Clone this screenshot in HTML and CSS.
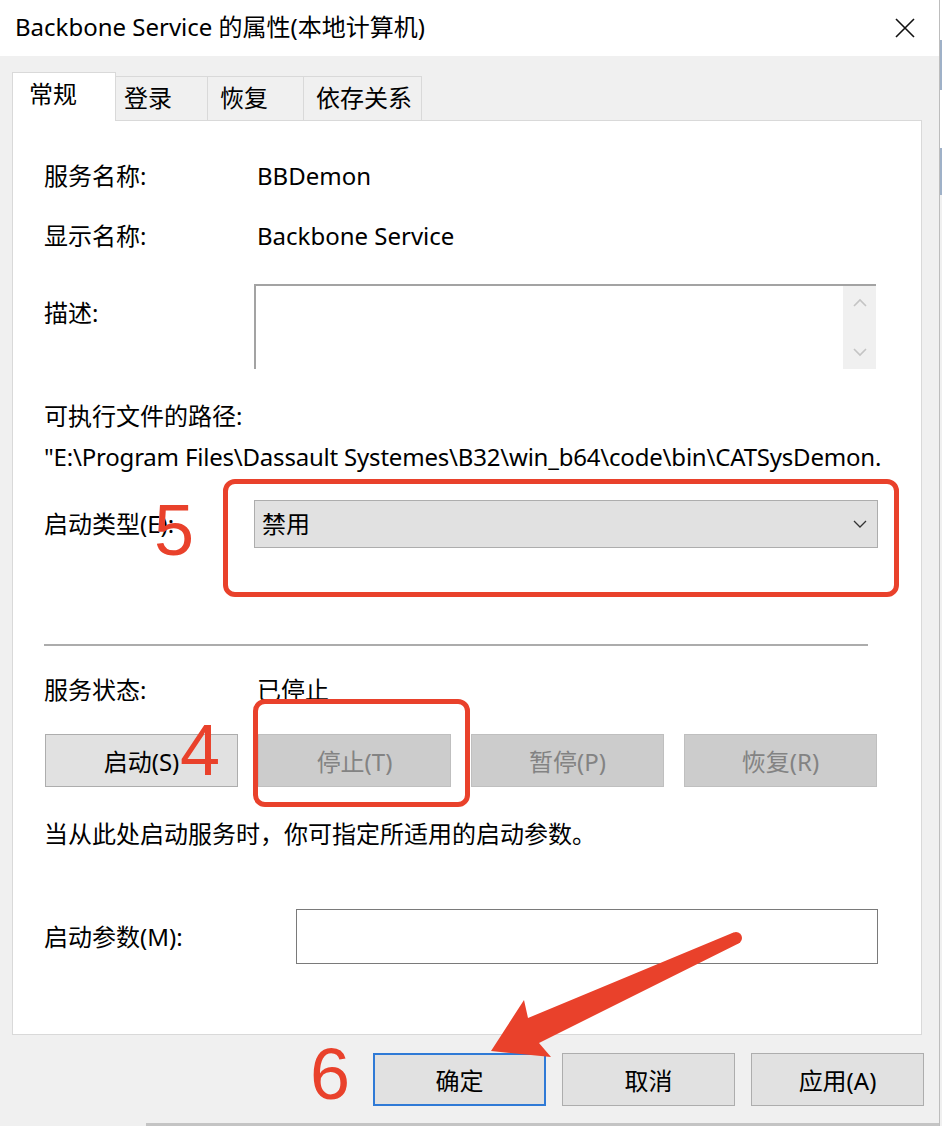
FILE: index.html
```html
<!DOCTYPE html>
<html lang="zh-CN">
<head>
<meta charset="utf-8">
<title>Backbone Service 的属性(本地计算机)</title>
<link rel="stylesheet" href="styles.css">
</head>
<body>
<div class="screen">
  <div class="window">
    <header class="titlebar">
      <span class="title">Backbone Service 的属性(本地计算机)</span>
      <svg class="close" width="20" height="20" viewBox="0 0 20 20"><path d="M1 1 L19 19 M19 1 L1 19" stroke="#111" stroke-width="1.6" fill="none"/></svg>
    </header>
    <div class="content">
      <nav class="tabs">
        <div class="tab active">常规</div>
        <div class="tab t-login">登录</div>
        <div class="tab t-recover">恢复</div>
        <div class="tab t-deps">依存关系</div>
      </nav>
      <section class="panel">
        <div class="row r-name"><span class="label">服务名称:</span><span class="value">BBDemon</span></div>
        <div class="row r-display"><span class="label">显示名称:</span><span class="value">Backbone Service</span></div>
        <div class="row r-desc">
          <span class="label">描述:</span>
          <div class="descbox">
            <div class="vscroll">
              <svg width="14" height="10" viewBox="0 0 14 10"><path d="M1 8 L7 2 L13 8" stroke="#c4c4c4" stroke-width="1.6" fill="none"/></svg>
              <svg width="14" height="10" viewBox="0 0 14 10"><path d="M1 2 L7 8 L13 2" stroke="#c4c4c4" stroke-width="1.6" fill="none"/></svg>
            </div>
          </div>
        </div>
        <div class="line r-pathlabel">可执行文件的路径:</div>
        <div class="line r-path">"E:\Program Files\Dassault Systemes\B32\win_b64\code\bin\CATSysDemon.</div>
        <div class="row r-startup">
          <span class="label">启动类型(E):</span>
          <div class="select">
            <span>禁用</span>
            <svg width="14" height="8" viewBox="0 0 14 8"><path d="M1 1 L7 7 L13 1" stroke="#333" stroke-width="1.3" fill="none"/></svg>
          </div>
        </div>
        <div class="separator"></div>
        <div class="row r-status"><span class="label">服务状态:</span><span class="value">已停止</span></div>
        <div class="svc-buttons">
          <button class="btn">启动(S)</button>
          <button class="btn disabled">停止(T)</button>
          <button class="btn disabled">暂停(P)</button>
          <button class="btn disabled">恢复(R)</button>
        </div>
        <div class="line r-hint">当从此处启动服务时，你可指定所适用的启动参数。</div>
        <div class="row r-params">
          <span class="label params-label">启动参数(M):</span>
          <div class="input"></div>
        </div>
      </section>
      <div class="actions">
        <button class="btn dlg default">确定</button>
        <button class="btn dlg">取消</button>
        <button class="btn dlg">应用(A)</button>
      </div>
      <div class="hscroll"></div>
    </div>
  </div>
  <div class="edge">
    <div class="edge-top"></div>
    <div class="edge-blk b1"></div>
    <div class="edge-gap"></div>
    <div class="edge-blk b2"></div>
  </div>

  <div class="mark-box box5"></div>
  <div class="mark-box box4"></div>
  <div class="digit d5">5</div>
  <div class="digit d4">4</div>
  <div class="digit d6">6</div>
  <svg class="arrow" width="270" height="145" viewBox="480 920 270 145">
    <polygon points="733.5,932.6 528,1018 524,1000 491,1051 551,1057 539,1043 738.5,943.4" fill="#e9412b"/>
    <circle cx="736" cy="938" r="6" fill="#e9412b"/>
  </svg>
</div>
</body>
</html>
```

FILE: styles.css
```css
* { box-sizing: border-box; }

html, body {
  margin: 0;
  padding: 0;
}

body {
  width: 942px;
  height: 1126px;
  overflow: hidden;
  background: #f0f0f0;
  font-family: "Noto Sans", "Noto Sans CJK SC", sans-serif;
  font-size: 24px;
  color: #000;
}

.screen {
  position: relative;
  display: flex;
  width: 942px;
  height: 1126px;
}

.window {
  width: 939px;
  height: 1126px;
  display: flex;
  flex-direction: column;
}

.titlebar {
  height: 56px;
  background: #fff;
  display: flex;
  align-items: center;
  padding: 0 24px 2px 15px;
}

.title {
  font-size: 24px;
  line-height: 30px;
  white-space: nowrap;
}

.close {
  margin-left: auto;
  margin-top: 2px;
}

.content {
  flex: 1;
  background: #f0f0f0;
  padding: 16px 0 0 12px;
  display: flex;
  flex-direction: column;
}

.tabs {
  display: flex;
  height: 48px;
  align-items: flex-start;
}

.tab {
  height: 44px;
  margin-top: 4px;
  border-top: 1px solid #d9d9d9;
  border-right: 1px solid #d9d9d9;
  background: #f0f0f0;
  line-height: 42px;
  white-space: nowrap;
}

.tab.active {
  position: relative;
  z-index: 2;
  height: 49px;
  margin-top: 0;
  width: 104px;
  background: #fff;
  border-left: 1px solid #d9d9d9;
  padding-left: 16px;
  line-height: 42px;
}

.t-login { width: 92px; padding-left: 8px; }
.t-recover { width: 96px; padding-left: 12px; }
.t-deps { width: 118px; padding-left: 12px; }

.panel {
  position: relative;
  z-index: 1;
  width: 910px;
  height: 915px;
  background: #fff;
  border: 1px solid #d9d9d9;
  padding: 40px 0 0 31px;
  display: flex;
  flex-direction: column;
}

.row {
  display: flex;
  align-items: center;
  line-height: 30px;
}

.label {
  width: 210px;
  flex: none;
  white-space: nowrap;
}

.value {
  padding-left: 3px;
  white-space: nowrap;
}

.line {
  line-height: 30px;
  white-space: nowrap;
}

.r-name { height: 30px; }
.r-display { height: 30px; margin-top: 30px; }

.r-desc {
  margin-top: 33px;
  align-items: flex-start;
}
.r-desc .label { padding-top: 14px; }

.descbox {
  width: 622px;
  height: 85px;
  border-top: 2px solid #a3a3a3;
  border-left: 2px solid #a3a3a3;
  display: flex;
  justify-content: flex-end;
}

.vscroll {
  width: 33px;
  height: 83px;
  background: #f0f0f0;
  display: flex;
  flex-direction: column;
  align-items: center;
  justify-content: space-between;
  padding: 12px 0 12px 0;
}

.r-pathlabel { margin-top: 32px; }
.r-path { margin-top: 11px; letter-spacing: -0.2px; }

.r-startup { margin-top: 28px; }

.select {
  width: 624px;
  height: 48px;
  background: #e1e1e1;
  border: 1px solid #adadad;
  display: flex;
  align-items: center;
  justify-content: space-between;
  padding: 0 10px 0 7px;
}

.separator {
  margin-top: 96px;
  width: 824px;
  height: 2px;
  background: #acacac;
}

.r-status { margin-top: 29px; }

.svc-buttons {
  margin-top: 29px;
  margin-left: 1px;
  width: 832px;
  display: grid;
  grid-template-columns: repeat(4, 1fr);
  gap: 20px;
}

.btn {
  height: 53px;
  background: #e1e1e1;
  border: 1px solid #adadad;
  font-family: inherit;
  font-size: 24px;
  color: #000;
  padding: 0;
  margin: 0;
}

.btn.disabled {
  background: #cccccc;
  border-color: #bfbfbf;
  color: #838383;
}

.r-hint { margin-top: 32px; }

.r-params { margin-top: 60px; }
.params-label { width: 252px; }

.input {
  width: 582px;
  height: 55px;
  border: 1px solid #7a7a7a;
  background: #fff;
}

.actions {
  margin-top: 18px;
  display: flex;
  justify-content: flex-end;
  gap: 16px;
  padding-right: 15px;
}

.btn.dlg {
  width: 173px;
}

.btn.default {
  border: 2px solid #2f7ad6;
}

.hscroll {
  margin-top: 17px;
  margin-left: 134px;
  height: 3px;
  background: #c4c4c4;
}

.edge {
  width: 3px;
  height: 1126px;
  border-left: 1px solid #bdbdbd;
  background: #f0f0f0;
  display: flex;
  flex-direction: column;
}

.edge-top { height: 40px; background: #fff; }
.edge-blk { background: #9fb1c8; }
.b1 { height: 50px; }
.edge-gap { height: 58px; background: #fff; }
.b2 { height: 47px; }

/* annotations overlaid on the screenshot */
.mark-box,
.digit,
.arrow {
  position: absolute;
  z-index: 10;
}

.mark-box {
  border: 5px solid #e9412b;
  border-radius: 12px;
}

.box5 { left: 223px; top: 479px; width: 676px; height: 118px; }
.box4 { left: 253px; top: 699px; width: 217px; height: 108px; }

.digit {
  font-family: "Liberation Sans", Arial, sans-serif;
  font-size: 72px;
  line-height: 72px;
  color: #e9412b;
}

.d5 { left: 154px; top: 494px; }
.d4 { left: 180px; top: 714px; }
.d6 { left: 310px; top: 1038px; }

.arrow {
  left: 480px;
  top: 920px;
}
```
